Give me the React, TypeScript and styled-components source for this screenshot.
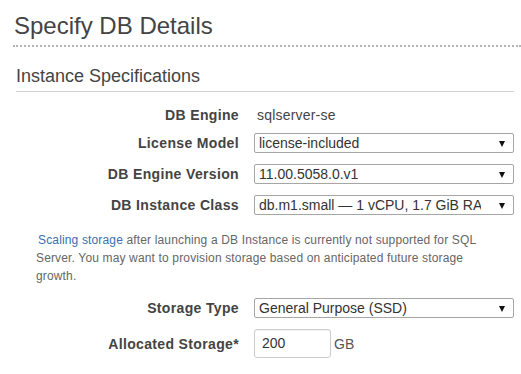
import React from "react";
import styled, { createGlobalStyle } from "styled-components";

const Global = createGlobalStyle`
  html, body { margin: 0; padding: 0; background: #fff; }
  body { font-family: "Liberation Sans", Arial, sans-serif; color: #444; }
`;

const Page = styled.div`
  padding: 12px 0 0 13px;
`;

const Title = styled.h1`
  margin: 0;
  padding: 0 0 5px 1px;
  font-size: 24px;
  line-height: 28px;
  font-weight: normal;
  color: #444;
  border-bottom: 2px dotted #b5b5b5;
`;

const Section = styled.section`
  margin: 18px 7px 0 3px;
`;

const SectionTitle = styled.h2`
  margin: 0;
  padding: 0 0 4px 0;
  font-size: 18px;
  line-height: 22px;
  font-weight: normal;
  color: #444;
  border-bottom: 1px solid #d0d0d0;
`;

const Form = styled.div`
  display: flex;
  flex-direction: column;
  padding-top: 13px;
`;

const Row = styled.div<{ $h?: number; $gap?: number }>`
  display: grid;
  grid-template-columns: 223px 260px;
  column-gap: 15px;
  align-items: center;
  min-height: ${(p) => p.$h ?? 20}px;
  margin-bottom: ${(p) => p.$gap ?? 11}px;
`;

const Label = styled.div`
  text-align: right;
  font-weight: bold;
  font-size: 14px;
  letter-spacing: 0.35px;
  color: #444;
  white-space: nowrap;
`;

const Value = styled.div`
  font-size: 14px;
  letter-spacing: 0.2px;
  color: #444;
  padding-left: 3px;
`;

const Select = styled.div`
  position: relative;
  height: 20px;
  box-sizing: border-box;
  border: 1px solid #a6a6a6;
  border-radius: 2px;
  background: #fff;
  font-size: 14px;
  line-height: 18px;
  color: #333;
  padding: 0 22px 0 4px;
  white-space: nowrap;
  overflow: hidden;
`;

const Arrow = styled.span`
  position: absolute;
  right: 8px;
  top: 7px;
  width: 0;
  height: 0;
  border-left: 3px solid transparent;
  border-right: 3px solid transparent;
  border-top: 6px solid #111;
  box-shadow: -14px 0 0 4px #fff;
`;

const Info = styled.p`
  margin: 16px 0 13px 20px;
  width: 460px;
  font-size: 12px;
  letter-spacing: 0.15px;
  line-height: 18px;
  color: #666;
`;

const Link = styled.a`
  color: #3a70ad;
  text-decoration: none;
  margin-left: 2px;
`;

const InputWrap = styled.div`
  display: flex;
  align-items: center;
  gap: 3px;
`;

const Input = styled.div`
  width: 77px;
  height: 29px;
  box-sizing: border-box;
  border: 1px solid #ccc;
  border-radius: 3px;
  box-shadow: inset 0 1px 1px rgba(0, 0, 0, 0.05);
  font-size: 14px;
  line-height: 27px;
  padding-left: 7px;
  color: #333;
`;

const Unit = styled.span`
  font-size: 14px;
  color: #555;
`;

const SelectField = ({ value }: { value: string }) => (
  <Select>
    {value}
    <Arrow />
  </Select>
);

export default function App() {
  return (
    <Page>
      <Global />
      <Title>Specify DB Details</Title>
      <Section>
        <SectionTitle>Instance Specifications</SectionTitle>
        <Form>
          <Row $gap={8}>
            <Label>DB Engine</Label>
            <Value>sqlserver-se</Value>
          </Row>
          <Row>
            <Label>License Model</Label>
            <SelectField value="license-included" />
          </Row>
          <Row>
            <Label>DB Engine Version</Label>
            <SelectField value="11.00.5058.0.v1" />
          </Row>
          <Row $gap={0}>
            <Label>DB Instance Class</Label>
            <SelectField value="db.m1.small — 1 vCPU, 1.7 GiB RAM" />
          </Row>
          <Info>
            <Link href="#">Scaling storage</Link> after launching a DB Instance is currently not supported for SQL
            Server. You may want to provision storage based on anticipated future storage growth.
          </Info>
          <Row>
            <Label>Storage Type</Label>
            <SelectField value="General Purpose (SSD)" />
          </Row>
          <Row $h={29} $gap={0}>
            <Label>Allocated Storage*</Label>
            <InputWrap>
              <Input>200</Input>
              <Unit>GB</Unit>
            </InputWrap>
          </Row>
        </Form>
      </Section>
    </Page>
  );
}
